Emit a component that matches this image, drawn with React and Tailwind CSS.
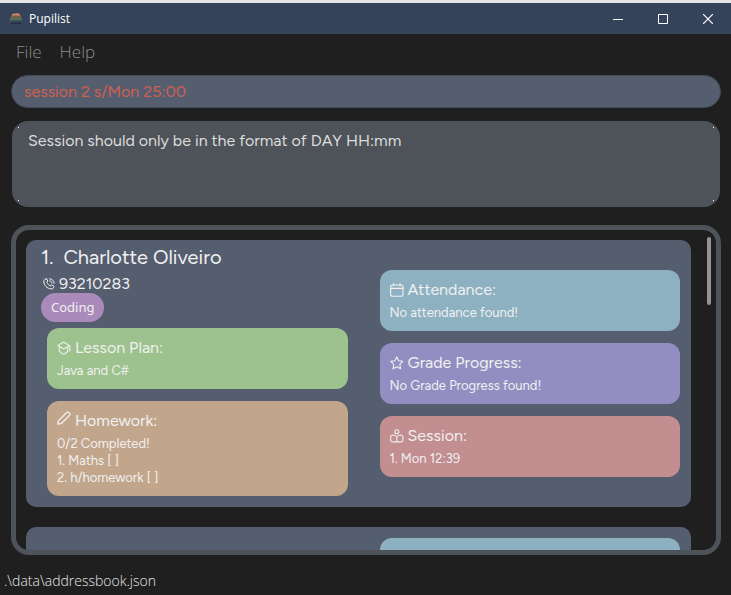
import React from "react";

function Icon({ children }) {
  return (
    <svg
      viewBox="0 0 14 14"
      className="size-3.5 shrink-0"
      fill="none"
      stroke="currentColor"
      strokeWidth="1.1"
      strokeLinecap="round"
      strokeLinejoin="round"
      aria-hidden="true"
    >
      {children}
    </svg>
  );
}

const CapIcon = () => (
  <Icon>
    <path d="M.8 4.6 6 1.500a1.400 1.400 0 0 1 1.400 0l5.200 3.100-5.200 2.900a1.400 1.400 0 0 1-1.400 0Z" />
    <path d="M2.300 5.800v4.600L5.600 12.700a2 2 0 0 0 2.200 0l2.900-2.200V6" />
    <path d="M12.800 4.800v5.400" />
  </Icon>
);

const PencilIcon = () => (
  <svg
    viewBox="0 0 14 14"
    className="mb-1.5 size-3.5 shrink-0"
    fill="none"
    stroke="currentColor"
    strokeWidth="1.3"
    strokeLinejoin="round"
    aria-hidden="true"
  >
    <path d="M.8 13.200 1.300 9.900 9.400 1.700a1.800 1.800 0 0 1 2.900 2.900L4.100 12.700Z" />
  </svg>
);

const CalendarIcon = () => (
  <Icon>
    <rect x="0.6" y="2" width="12.4" height="11.2" rx="2" />
    <path d="M.6 5.400H13M3.600.600v2.200M10 .600v2.200" />
  </Icon>
);

const StarIcon = () => (
  <Icon>
    <path d="M6.800.900 8.700 4.800l4.100.600-3 3 .800 4.400-3.800-2.100L3 12.800l.800-4.400-3-3 4.100-.600Z" />
  </Icon>
);

const ReaderIcon = () => (
  <Icon>
    <circle cx="6.8" cy="2.8" r="2" />
    <path d="M6.800 7.600C5.400 6.300 4 6 2.600 6A2 2 0 0 0 .700 8v3a1.800 1.800 0 0 0 1.800 1.900h8.600a1.800 1.800 0 0 0 1.800-1.900V8a2 2 0 0 0-1.900-2c-1.400 0-2.800.300-4.200 1.600Zm0 0v5.200" />
  </Icon>
);

const PhoneIcon = () => (
  <svg
    viewBox="0 0 12 12"
    className="size-3 shrink-0"
    fill="none"
    stroke="currentColor"
    strokeWidth="1"
    strokeLinecap="round"
    strokeLinejoin="round"
    aria-hidden="true"
  >
    <path d="M3.600.900 4.800 3 3.900 4.400c.600 1.500 1.700 2.700 3.300 3.400l1.400-.900 2.200 1.300c0 1.800-1 2.900-2.800 2.700C4 10.500 1 7.300.800 3.600.700 2 1.800.900 3.600.900Z" />
    <path d="M6.600.700c2.500.200 4.400 2 4.600 4.500M6.600 2.800c1.400.200 2.200 1 2.400 2.400" />
  </svg>
);

function Panel({ tone, icon, title, lines }) {
  return (
    <section className={`rounded-xl px-2.5 pt-2.5 pb-2.5 text-[#f0f0f0] ${tone}`}>
      <h3 className="flex items-center gap-1 text-base leading-5">
        {icon}
        {title}
      </h3>
      <div className="mt-1 text-[13px] leading-[17px]">
        {lines.map((line) => (
          <p key={line}>{line}</p>
        ))}
      </div>
    </section>
  );
}

function TitleBar() {
  return (
    <header className="flex h-[34px] items-center border-t-[3px] border-[#e4e4e8] bg-[#34435a] pl-[9px] text-white">
      <svg viewBox="0 0 14 14" className="size-3.5" aria-hidden="true">
        <path d="M3 2.500 5 1.300l1.500.500L8.500 1l2.500 1.500 1 3H2Z" fill="#d98773" />
        <path d="M3 3.500h8l1 2H2Z" fill="#7a5545" />
        <path d="M1.500 5.300 5 6l3-1.200 4.500 1L13.800 8.500H.200Z" fill="#526f51" />
        <path d="M2 11.500h10" stroke="#222c3b" strokeWidth="1.5" strokeDasharray="1.5 .4" />
      </svg>
      <h1 className="ml-1.5 flex-1 font-['Open_Sans',sans-serif] text-xs">Pupilist</h1>
      <div className="flex h-full">
        <button type="button" aria-label="Minimize" className="grid w-[45px] place-items-center">
          <svg viewBox="0 0 10 10" className="size-2.5" stroke="currentColor" aria-hidden="true">
            <path d="M0 5.500h10" />
          </svg>
        </button>
        <button type="button" aria-label="Maximize" className="grid w-[45px] place-items-center">
          <svg viewBox="0 0 10 10" className="size-2.5" fill="none" stroke="currentColor" aria-hidden="true">
            <path d="M.500.500h9v9h-9Z" />
          </svg>
        </button>
        <button type="button" aria-label="Close" className="grid w-[46px] place-items-center">
          <svg viewBox="0 0 10 10" className="size-2.5" stroke="currentColor" strokeWidth="1.2" aria-hidden="true">
            <path d="m0 0 10 10M10 0 0 10" />
          </svg>
        </button>
      </div>
    </header>
  );
}

export default function App() {
  return (
    <div className="flex h-screen flex-col overflow-hidden bg-[#1f1f1f] font-[Figtree,Inter,sans-serif]">
      <TitleBar />
      <nav className="flex gap-[18px] px-4 pt-1.5 font-['Open_Sans',sans-serif] text-[17px] leading-6 font-light text-[#8c8c8c]">
        <button type="button">File</button>
        <button type="button">Help</button>
      </nav>

      <main className="flex min-h-0 flex-1 flex-col pt-[11px] pr-2.5 pl-[11px]">
        <input
          type="text"
          aria-label="Command"
          defaultValue="session 2 s/Mon 25:00"
          className="h-[33px] shrink-0 rounded-full border border-[#434955] bg-[#555e6f] px-3 text-base text-[#d0604f] outline-none"
        />
        <div className="relative mx-px mt-[13px] h-[86px] shrink-0 rounded-2xl bg-[#4e5259] px-4 py-2.5 text-base leading-5 text-[#dcdcdc]">
          <p>Session should only be in the format of DAY HH:mm</p>
          <i className="absolute top-1.5 left-1.5 size-px bg-white" />
          <i className="absolute top-1.5 right-1.5 size-px bg-white" />
          <i className="absolute bottom-1.5 left-1.5 size-px bg-white" />
          <i className="absolute right-1.5 bottom-1.5 size-px bg-white" />
        </div>

        <div className="relative mt-[18px] min-h-0 flex-1 overflow-hidden rounded-[18px] border-5 border-[#4e5259] py-2.5 pr-[25px] pl-2.5">
          <ul className="flex flex-col gap-5">
            <li className="grid grid-cols-2 gap-x-8 rounded-[10px] bg-[#555e6f] pr-[11px] pb-[11px] pl-[21px] text-[#f0f0f0]">
              <div>
                <div className="-ml-1.5">
                  <h2 className="flex gap-2.5 pt-[5px] text-xl leading-[25px]">
                    <span>1.</span>
                    <span>Charlotte Oliveiro</span>
                  </h2>
                  <p className="flex items-center gap-1 pt-1 pl-0.5 text-base leading-[19px]">
                    <PhoneIcon />
                    93210283
                  </p>
                  <span className="inline-block rounded-full bg-[#a98abb] px-2.5 py-1 font-['Noto_Sans',sans-serif] text-[13px] leading-[21px]">
                    Coding
                  </span>
                </div>
                <div className="mt-1.5 flex flex-col gap-3">
                  <Panel tone="bg-[#9ec28e]" icon={<CapIcon />} title="Lesson Plan:" lines={["Java and C#"]} />
                  <Panel
                    tone="bg-[#c2a68c]"
                    icon={<PencilIcon />}
                    title="Homework:"
                    lines={["0/2 Completed!", "1. Maths [ ]", "2. h/homework [ ]"]}
                  />
                </div>
              </div>
              <div className="flex flex-col justify-center gap-3 pt-[11px]">
                <Panel tone="bg-[#8eb1c2]" icon={<CalendarIcon />} title="Attendance:" lines={["No attendance found!"]} />
                <Panel tone="bg-[#928ec2]" icon={<StarIcon />} title="Grade Progress:" lines={["No Grade Progress found!"]} />
                <Panel tone="bg-[#c28e90]" icon={<ReaderIcon />} title="Session:" lines={["1. Mon 12:39"]} />
              </div>
            </li>
            <li className="grid grid-cols-2 gap-x-8 rounded-[10px] bg-[#555e6f] py-[11px] pr-[11px] pl-[21px]">
              <div className="col-start-2 h-[61px] rounded-xl bg-[#8eb1c2]" />
            </li>
          </ul>
          <div className="absolute top-[7px] right-[5px] h-[68px] w-1 rounded-full bg-[#949494]" />
        </div>
      </main>

      <footer className="px-1 pt-[15px] pb-[3px] font-['Open_Sans',sans-serif] text-sm leading-[22px] font-light text-[#e8e8e8]">
        .\data\addressbook.json
      </footer>
    </div>
  );
}
